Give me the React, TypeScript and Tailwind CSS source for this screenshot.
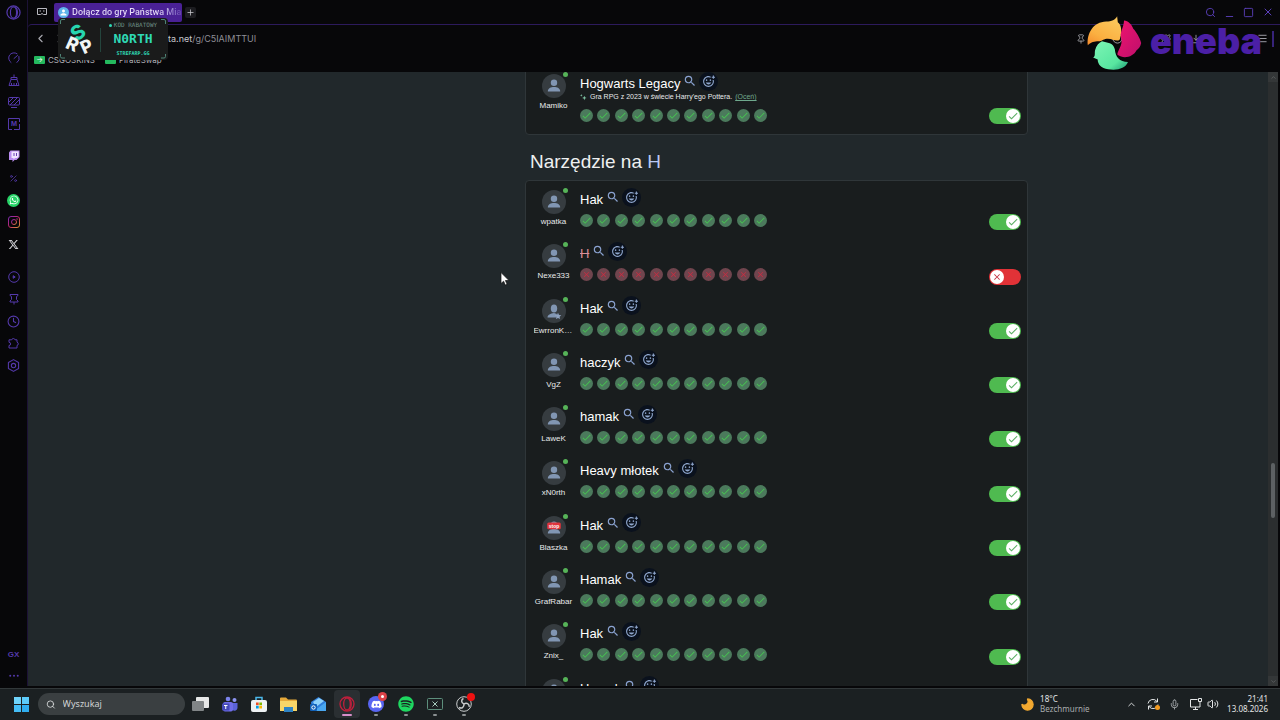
import type { ReactNode } from 'react';
import { MdCheck, MdClose, MdOutlineAddReaction, MdPerson, MdSearch } from 'react-icons/md';
import { FaDiscord, FaSpotify, FaWhatsapp, FaXTwitter } from 'react-icons/fa6';
import {
  ChevronDown,
  ChevronLeft,
  ChevronRight,
  ChevronUp,
  CircleCheck,
  Clock,
  Download,
  Menu,
  Mic,
  Minus,
  Moon,
  Percent,
  Pin,
  Plus,
  Puzzle,
  Search,
  Square,
  Volume2,
  X,
} from 'lucide-react';

type Row = {
  player: string;
  answer: string;
  accepted: boolean;
  avatar?: 'star' | 'stop';
};

const rows: Row[] = [
  { player: 'wpatka', answer: 'Hak', accepted: true },
  { player: 'Nexe333', answer: 'H', accepted: false },
  { player: 'EwrronKing', answer: 'Hak', accepted: true, avatar: 'star' },
  { player: 'VgZ', answer: 'haczyk', accepted: true },
  { player: 'LaweK', answer: 'hamak', accepted: true },
  { player: 'xN0rth', answer: 'Heavy młotek', accepted: true },
  { player: 'Blaszka', answer: 'Hak', accepted: true, avatar: 'stop' },
  { player: 'GrafRabar', answer: 'Hamak', accepted: true },
  { player: 'Znix_', answer: 'Hak', accepted: true },
  { player: '', answer: 'Hamak', accepted: true },
];

function Avatar({ kind }: { kind?: 'star' | 'stop' }) {
  return (
    <div className="relative flex size-6 shrink-0 items-center justify-center rounded-full bg-[#363c40]">
      <svg viewBox="0 0 24 24" className="size-6" aria-hidden="true">
        {kind === 'star' ? (
          <>
            <ellipse cx="12" cy="9.6" rx="3.2" ry="4" fill="#8196b3" />
            <path d="M5.5 18.5c0-3 3-4 6.5-4.6l3 1-1 3.6z" fill="#8196b3" />
            <path d="M16 13.8l1 2.1 2.3.3-1.7 1.6.4 2.3-2-1.1-2 1.1.4-2.3-1.7-1.6 2.3-.3z" fill="#8fa3c0" />
          </>
        ) : (
          <>
            <circle cx="12" cy="8.8" r="3.2" fill="#8196b3" />
            <path d="M5.8 17.5c0-3.3 3-4.5 6.2-4.5s6.2 1.2 6.2 4.5z" fill="#8196b3" />
          </>
        )}
        {kind === 'stop' && (
          <>
            <rect x="5.2" y="6.5" width="13.6" height="6.8" rx="1.5" fill="#e0343c" />
            <text x="12" y="11.6" textAnchor="middle" fontSize="5" fontWeight="700" fill="#fff" fontFamily="Liberation Sans, sans-serif">
              stop
            </text>
          </>
        )}
      </svg>
      <span className="absolute -top-0.5 -right-0.5 size-[5px] rounded-full bg-[#56b358]" />
    </div>
  );
}

function Votes({ accepted }: { accepted: boolean }) {
  return (
    <div className="flex w-[187px] justify-between">
      {Array.from({ length: 11 }, (_, i) =>
        accepted ? (
          <span key={i} className="flex size-[13px] items-center justify-center rounded-full bg-[#4b7a5c] text-[#47c052]">
            <MdCheck size={11} />
          </span>
        ) : (
          <span key={i} className="flex size-[13px] items-center justify-center rounded-full bg-[#70454e] text-[#c42f43]">
            <MdClose size={9} />
          </span>
        ),
      )}
    </div>
  );
}

function Toggle({ accepted, label }: { accepted: boolean; label: string }) {
  return (
    <label className="flex h-4 w-8 shrink-0 cursor-pointer items-center rounded-full bg-[#e13237] p-px has-checked:justify-end has-checked:bg-[#4fba50]">
      <input type="checkbox" defaultChecked={accepted} aria-label={label} className="peer sr-only" />
      <span className="flex size-3.5 items-center justify-center rounded-full bg-white text-[#c22f40] peer-checked:hidden">
        <MdClose size={10} />
      </span>
      <span className="hidden size-3.5 items-center justify-center rounded-full bg-white text-[#5cb065] peer-checked:flex">
        <MdCheck size={12} />
      </span>
    </label>
  );
}

function AnswerRow({ row, children }: { row: Row; children?: ReactNode }) {
  return (
    <li className="flex pr-1.5">
      <div className="flex w-[55px] shrink-0 flex-col items-center pt-[9px]">
        <Avatar kind={row.avatar} />
        <span className="w-10 truncate text-center text-[8px] leading-4 text-[#e8eaeb]">{row.player}</span>
      </div>
      <div className="-ml-px flex min-w-0 flex-1 flex-col pt-[7px]">
        <div className="flex h-[18px] items-center">
          <span className={row.accepted ? 'pt-1.5 text-[13px] leading-4 text-white' : 'pt-1.5 text-[13px] leading-4 text-[#dc8f98] line-through'}>
            {row.answer}
          </span>
          <button className="ml-[3px] text-[#8aa2d0]" aria-label="Szukaj odpowiedzi">
            <MdSearch size={14} />
          </button>
          <button className="ml-0.5 flex size-[19px] items-center justify-center rounded-full bg-[#0a111d] text-[#8ea6cd]" aria-label="Dodaj reakcję">
            <MdOutlineAddReaction size={13} />
          </button>
        </div>
        {children}
        <div className={children ? 'pt-2 pb-[7px]' : 'pt-2'}>
          <Votes accepted={row.accepted} />
        </div>
      </div>
      <div className="flex flex-col justify-end pb-[5px]">
        <Toggle accepted={row.accepted} label={`Odpowiedź gracza ${row.player}`} />
      </div>
    </li>
  );
}

function Sidebar() {
  const item = 'flex h-[22px] w-full items-center justify-center';
  return (
    <nav className="flex w-7 shrink-0 flex-col items-center border-r border-[#1c1236] text-[#5439ab]">
      <button className="flex h-[25px] items-center" aria-label="Opera">
        <OperaMark className="size-[15px]" />
      </button>
      <div className="mt-[22px] w-full">
        <button className={item} aria-label="GX Control">
          <svg viewBox="0 0 12 12" className="size-3" fill="none" stroke="currentColor" strokeLinecap="round">
            <path d="M3 10.5A5.2 5.2 0 1 1 9 1.7M11 4.5a5.2 5.2 0 0 1-2 6M6 6.5l3.5-3" />
          </svg>
        </button>
        <button className={item} aria-label="GX Cleaner">
          <svg viewBox="0 0 12 12" className="size-3" fill="none" stroke="currentColor">
            <path d="M6 .5v3M3 3.5h6v2H3zM3 5.5L1 11.5h10L9 5.5M3.5 9v2.5M6 9v2.5M8.5 9v2.5" />
          </svg>
        </button>
        <button className={item} aria-label="Tapety">
          <svg viewBox="0 0 12 12" className="size-3" fill="none" stroke="currentColor">
            <rect x=".5" y="1.5" width="11" height="7.5" rx="1" />
            <path d="M1 6l4-4M2 9l7-7M6 9l5-5M3 11.5h6" />
          </svg>
        </button>
        <button className={item} aria-label="Mody">
          <svg viewBox="0 0 12 12" className="size-3" fill="none" stroke="currentColor">
            <path d="M8 .5H.5v11H4M8 .5h3.5V4M11.5 6v5.5H6" />
            <text x="6" y="8.3" textAnchor="middle" fontSize="6.5" fontWeight="700" stroke="none" fill="currentColor" fontFamily="Inter, sans-serif">M</text>
          </svg>
        </button>
      </div>
      <div className="mt-2.5 w-full">
        <button className={item} aria-label="Twitch">
          <svg viewBox="0 0 12 12" className="size-3">
            <path d="M2.5.5h9v6.5L8.5 10H6.5l-2 2v-2H1V2.5z" fill="#b98cf0" />
            <path d="M3.5 1.5h7v5L9 8H7L5.5 9.5V8h-2z" fill="#f1e6ff" />
            <path d="M6 3v3M8.5 3v3" stroke="#6a3fb5" />
          </svg>
        </button>
        <button className={item} aria-label="Promocje"><Percent size={9} /></button>
        <button className={item} aria-label="WhatsApp">
          <span className="flex size-[13px] items-center justify-center rounded-full bg-[#25d366] text-white"><FaWhatsapp size={10} /></span>
        </button>
        <button className={item} aria-label="Instagram">
          <svg viewBox="0 0 12 12" className="size-3" fill="none" stroke="url(#insta)">
            <defs>
              <linearGradient id="insta" x1="0" y1="0" x2="1" y2="1">
                <stop offset="0" stopColor="#7c2bb8" />
                <stop offset=".5" stopColor="#c4286b" />
                <stop offset="1" stopColor="#d99a35" />
              </linearGradient>
            </defs>
            <rect x=".5" y=".5" width="11" height="11" rx="2.5" />
            <circle cx="6" cy="6" r="2.5" />
            <circle cx="9" cy="3" r=".3" />
          </svg>
        </button>
        <button className={item} aria-label="X"><FaXTwitter size={11} className="text-[#cfcfd4]" /></button>
      </div>
      <div className="mt-[11px] w-full">
        <button className={item} aria-label="Odtwarzacz">
          <svg viewBox="0 0 12 12" className="size-3" fill="none" stroke="currentColor"><circle cx="6" cy="6" r="5.3" /><path d="M5.2 4.7l2 1.3-2 1.3z" fill="currentColor" /></svg>
        </button>
        <button className={item} aria-label="Przypięte">
          <svg viewBox="0 0 12 12" className="size-3" fill="none" stroke="currentColor"><path d="M2 1.5h8v1L8.5 3.5v3L10 8v1H2V8l1.5-1.5v-3L2 2.5zM6 9v2.5" /></svg>
        </button>
        <button className={item} aria-label="Historia"><Clock size={13} /></button>
        <button className={item} aria-label="Rozszerzenia">
          <svg viewBox="0 0 12 12" className="size-3" fill="none" stroke="currentColor" strokeLinejoin="round">
            <path d="M1 2.8h2.700a1.700 1.700 0 0 1 3.300 0h2v2.400a1.700 1.700 0 0 1 0 3.300V11H1V8.500a1.600 1.600 0 0 0 0-3.200z" />
          </svg>
        </button>
        <button className={item} aria-label="Ustawienia">
          <svg viewBox="0 0 12 12" className="size-[13px]" fill="none" stroke="currentColor"><path d="M6 .6l4.7 2.7v5.4L6 11.4 1.3 8.7V3.3z" strokeLinejoin="round" /><circle cx="6" cy="6" r="2" /></svg>
        </button>
      </div>
      <div className="mt-auto w-full">
        <button className="flex h-[22px] w-full items-center justify-center text-[8px] font-bold">GX</button>
        <button className="flex h-5 w-full items-center justify-center" aria-label="Więcej">
          <svg viewBox="0 0 12 4" className="w-2.5" fill="currentColor">
            <circle cx="1.5" cy="2" r="1.2" />
            <circle cx="6" cy="2" r="1.2" />
            <circle cx="10.5" cy="2" r="1.2" />
          </svg>
        </button>
      </div>
    </nav>
  );
}

function OperaMark({ className }: { className: string }) {
  return (
    <svg viewBox="0 0 16 16" className={className} fill="none" stroke="currentColor" strokeWidth="1.3" aria-hidden="true">
      <circle cx="8" cy="8" r="7" />
      <ellipse cx="8" cy="8" rx="3.3" ry="6" />
      <path d="M10 2.5c3 2 3 9 0 11" />
    </svg>
  );
}

function SponsorCoupon() {
  return (
    <div className="absolute top-[18px] left-[58px] flex h-[42px] w-[110px] items-center rounded bg-[#1a1b1b]">
      <svg viewBox="0 0 110 42" className="absolute inset-0 size-full" fill="none" stroke="#4f8577" aria-hidden="true">
        <path d="M2.5 6V3a1.5 1.5 0 0 1 1.5-1.5h3M103 1.5h3a1.5 1.5 0 0 1 1.5 1.5v3M2.5 36v2.5a1.5 1.5 0 0 0 1.5 1.5h3M103 40h3a1.5 1.5 0 0 0 1.5-1.5V36" />
        <path d="M42.5 10v24" stroke="#24453d" />
      </svg>
      <svg viewBox="0 0 42 42" className="h-full w-[42px]" fontFamily="Inter, sans-serif" fontWeight="800" textAnchor="middle" aria-label="SRP">
        <text transform="translate(24 20) rotate(-36)" fontSize="20" fill="#27d6b0">S</text>
        <text transform="translate(12 32) rotate(24)" fontSize="18" fill="#f2f5f4">R</text>
        <text transform="translate(31 34) rotate(-24)" fontSize="18" fill="#f2f5f4">P</text>
      </svg>
      <div className="flex flex-1 flex-col items-center pr-0.5 font-['DejaVu_Sans_Mono',monospace] font-bold text-[#2fd9b5]">
        <span className="flex items-center gap-0.5 text-[6px] leading-2 font-normal text-[#6d8f86]">
          <span className="size-[3px] rounded-full bg-[#2fd9b5]" />
          KOD RABATOWY
        </span>
        <span className="py-0.5 text-[13px] leading-4">N0RTH</span>
        <span className="text-[5px] leading-2">STREFARP.GG</span>
      </div>
    </div>
  );
}

function SponsorLogo() {
  return (
    <div className="absolute top-0 right-[18px] flex h-20 items-center">
      <svg viewBox="138 40 170 176" className="mt-1.5 mr-[7px] h-[58px] w-[57px]" aria-hidden="true">
        <defs>
          <linearGradient id="amber" x1="0" y1="1" x2=".6" y2="0">
            <stop offset="0" stopColor="#f58a2c" />
            <stop offset=".4" stopColor="#fbb041" />
            <stop offset="1" stopColor="#fbc65a" />
          </linearGradient>
          <linearGradient id="rose" x1="0" y1="0" x2="1" y2="1">
            <stop offset="0" stopColor="#f0146e" />
            <stop offset="1" stopColor="#bd0f6c" />
          </linearGradient>
          <linearGradient id="mint" x1="0" y1="0" x2="1" y2="1">
            <stop offset="0" stopColor="#7df5b5" />
            <stop offset=".7" stopColor="#58e6a0" />
            <stop offset="1" stopColor="#1d9a74" />
          </linearGradient>
        </defs>
        <path d="M142 135C138 100 158 64 198 63c16 0 28-5 33-16l2 18c12 8 13 30 6 52-10 10-22-4-40-2-12 2-14 8-24 8-14 0-22 2-33 12z" fill="url(#amber)" />
        <path d="M252 60c12 1 24 12 28 25 10 10 20 28 24 43-2 12-8 17-14 22-10 20-38 28-58 14-2-12 18-28 11-52-5-16 8-30 9-52z" fill="url(#rose)" />
        <path d="M185 123c16 5 34 3 39 24 2 24 14 38 40 39-8 20-32 26-60 22-22-3-32-16-32-30l-14-6c8-4 4-12 6-22 4-14 11-22 21-27z" fill="url(#mint)" />
      </svg>
      <span className="pt-0.5 font-[Inter,sans-serif] text-4xl font-black text-[#4b1fa6]">eneba</span>
    </div>
  );
}

function BrowserBar() {
  return (
    <header className="flex h-[72px] flex-col font-[Inter,sans-serif]">
      <div className="flex h-6 items-center pr-1.5 text-[#5a3fba]">
        <svg viewBox="0 0 12 10" className="ml-2 h-2.5 w-3" fill="none" stroke="#b9b9c0" aria-hidden="true">
          <path d="M1.5 1.5h9v6H7.5L6 6.5l-1.5 1h-3zM3.5 4h1.5M7 4h1.5" />
        </svg>
        <div className="mt-px ml-1.5 flex h-[19px] w-32 items-center gap-[3px] rounded-xs bg-[#4a2196] px-1">
          <span className="flex size-[11px] shrink-0 items-center justify-center rounded-full bg-[#5fb4ea] text-white">
            <MdPerson size={9} />
          </span>
          <span className="bg-linear-to-r from-[#e6ddf8] from-80% to-[#6a48b0] bg-clip-text font-[Roboto,sans-serif] text-[9px] font-medium whitespace-nowrap text-transparent">
            Dołącz do gry Państwa Mia
          </span>
        </div>
        <button className="ml-[3px] flex size-[11px] items-center justify-center rounded-xs bg-[#1c1c20] text-[#c9c9cf]" aria-label="Nowa karta">
          <Plus size={9} />
        </button>
        <div className="ml-auto flex items-center gap-2">
          <button aria-label="Szukaj kart"><Search size={11} /></button>
          <button className="flex h-3 items-end" aria-label="Minimalizuj"><Minus size={11} className="-mb-1" /></button>
          <button aria-label="Maksymalizuj"><Square size={11} /></button>
          <button aria-label="Zamknij"><X size={12} /></button>
        </div>
      </div>
      <div className="flex h-7 items-center rounded-tl border-t border-[#2c1a5c] pr-1.5 pl-1.5 text-[#a9a9b0]">
        <button aria-label="Wstecz"><ChevronLeft size={13} /></button>
        <button className="ml-1.5 text-[#44444a]" aria-label="Dalej"><ChevronRight size={13} /></button>
        <span className="flex-1 pl-[102px] text-[9px] text-[#8e8e96]">
          <span className="text-[#c9c9cf]">ta.net</span>/g/C5IAIMTTUI
        </span>
        <div className="flex items-center">
          <button className="mr-[26px]" aria-label="Przypnij"><Pin size={10} /></button>
          <button className="mr-[38px]" aria-label="Zabezpieczenia"><CircleCheck size={11} /></button>
          <button className="mr-5" aria-label="Rozszerzenia"><Puzzle size={10} /></button>
          <button className="mr-14" aria-label="Pobrane"><Download size={10} /></button>
          <button className="mr-1" aria-label="Menu"><Menu size={11} /></button>
          <span className="h-4 w-0.5 bg-[#37237a]" />
        </div>
      </div>
      <div className="flex h-4 items-center gap-2.5 pl-1.5 text-[8px] text-[#b4b4ba]">
        <a href="#cs" className="flex items-center gap-[3px]">
          <span className="flex h-2 w-[11px] items-center justify-center rounded-[1px] bg-[#24b95e] text-[7px] text-white">→</span>
          CSGOSKINS
        </a>
        <a href="#pirate" className="flex items-center gap-[3px]">
          <span className="h-2 w-[11px] rounded-[1px] bg-[#24b95e]" />
          PirateSwap
        </a>
      </div>
    </header>
  );
}

function Taskbar() {
  const item = 'relative flex h-7 items-center justify-center';
  const dot = 'absolute bottom-0.5 h-0.5 w-1 rounded-full bg-[#8b9092]';
  return (
    <footer className="flex h-8 shrink-0 items-center border-t border-[#32383a] bg-[#1b2022] pb-px pl-3.5 font-['Noto_Sans',sans-serif] text-[#e4e6e7]">
      <button className="grid grid-cols-2 gap-px" aria-label="Start">
        <span className="size-[7px] bg-[#6fd3fb]" />
        <span className="size-[7px] bg-[#5ccbfa]" />
        <span className="size-[7px] bg-[#45bdf6]" />
        <span className="size-[7px] bg-[#30aef0]" />
      </button>
      <label className="ml-[9px] flex h-[22px] w-[147px] items-center gap-[7px] rounded-full bg-[#3a3f41] px-2">
        <Search size={11} />
        <input aria-label="Wyszukaj" placeholder="Wyszukaj" className="w-full bg-transparent text-[9px] outline-none placeholder:text-[#d0d3d4]" />
      </label>
      <div className="ml-px grid w-[293px] grid-cols-10">
        <button className={item} aria-label="Widok zadań">
          <svg viewBox="0 0 17 16" className="h-4 w-[17px]"><rect x="4" y="1" width="13" height="11" rx="1" fill="#e7e8e8" /><rect x="0" y="5" width="12" height="10" rx="1" fill="#818587" /></svg>
        </button>
        <button className={item} aria-label="Teams">
          <svg viewBox="0 0 16 16" className="size-4"><circle cx="6" cy="3" r="2.3" fill="#7b83eb" /><circle cx="12.5" cy="4" r="2" fill="#8c93f0" /><path d="M9 7h6.5v5a3 3 0 0 1-5 2z" fill="#5a62d8" /><rect x="1" y="6" width="10" height="9.5" rx="2" fill="#6f6de8" /><rect x="0" y="7.5" width="7.5" height="7" rx="1" fill="#4549b8" /><path d="M2 9.5h3.5M3.75 9.5v3.5" stroke="#fff" /></svg>
        </button>
        <button className={item} aria-label="Microsoft Store">
          <svg viewBox="0 0 16 16" className="size-4"><path d="M5 5V1.5h6V5" fill="none" stroke="#4cb9ec" strokeWidth="1.5" /><rect x="0" y="4" width="16" height="12" rx="2" fill="#eef1f3" /><path d="M5 6.5h2.7v2.7H5z" fill="#f04e23" /><path d="M8.3 6.5H11v2.7H8.3z" fill="#7db700" /><path d="M5 9.8h2.7v2.7H5z" fill="#00a0e8" /><path d="M8.3 9.8H11v2.7H8.3z" fill="#fbb500" /></svg>
        </button>
        <button className={item} aria-label="Eksplorator plików">
          <svg viewBox="0 0 17 15" className="h-[15px] w-[17px]"><path d="M0 1.5A1 1 0 0 1 1 .5h5l2 2h8a1 1 0 0 1 1 1V14H0z" fill="#e6a93a" /><path d="M0 4h17v10H0z" fill="#f8d568" /><path d="M4 10h9v5H4z" fill="#2f83c4" /></svg>
        </button>
        <button className={item} aria-label="Outlook">
          <svg viewBox="0 0 16 16" className="size-4"><path d="M1 6l7.5-5L16 6v9H2z" fill="#2f7fdc" /><path d="M3 6l6-4 5 3-8 6z" fill="#8fd2fa" /><path d="M16 6L4 15h12z" fill="#49a7f0" /><rect x="0" y="8" width="7" height="7" rx="1" fill="#1160b7" /><circle cx="3.5" cy="11.5" r="1.7" fill="none" stroke="#fff" /></svg>
        </button>
        <button className="relative mx-0.5 flex h-7 items-center justify-center rounded bg-[#2a2f32] text-[#c01f3c]" aria-label="Opera GX">
          <OperaMark className="size-4" />
          <span className="absolute bottom-0.5 h-0.5 w-2.5 rounded-full bg-[#d68fc9]" />
        </button>
        <button className={item} aria-label="Discord">
          <span className="flex size-4 items-center justify-center rounded-full bg-[#5865f2] text-white"><FaDiscord size={11} /></span>
          <span className="absolute top-0.5 right-1 flex size-[9px] items-center justify-center rounded-full bg-[#dd4248]"><span className="size-[3px] rounded-full bg-white" /></span>
          <span className={dot} />
        </button>
        <button className={item} aria-label="Spotify"><FaSpotify size={16} className="text-[#1ed760]" /><span className={dot} /></button>
        <button className={item} aria-label="Xbox Game Bar">
          <svg viewBox="0 0 16 12" className="h-3 w-4" fill="none" stroke="#5d8f7c"><rect x=".5" y=".5" width="15" height="11" rx="1" /><path d="M5.5 3.5l5 5M10.5 3.5l-5 5" stroke="#a5c9bb" /></svg>
          <span className={dot} />
        </button>
        <button className={item} aria-label="OBS Studio">
          <svg viewBox="0 0 16 16" className="size-4" fill="none" stroke="#c9cccd"><circle cx="8" cy="8" r="7.3" /><path d="M8 8C5 7 5 3.5 7.5 2.5M8 8c2.5-2 5.5 0 5.2 2.8M8 8c.3 3.2-2.5 5-5 3.5" strokeWidth="1.5" /></svg>
          <span className="absolute top-[3px] right-1 size-2 rounded-full bg-[#ee1111]" />
          <span className={dot} />
        </button>
      </div>
      <div className="ml-auto flex items-center pr-3">
        <Moon size={15} className="-scale-x-100 fill-[#f2a830] text-[#f2a830]" />
        <div className="ml-[5px] flex w-[86px] flex-col text-[8px] leading-2.5">
          <span>18°C</span>
          <span className="text-[#a9adaf]">Bezchmurnie</span>
        </div>
        <div className="flex items-center gap-2.5">
          <button aria-label="Ukryte ikony"><ChevronUp size={11} /></button>
          <button className="relative" aria-label="Aktualizacja">
            <svg viewBox="0 0 12 12" className="size-3" fill="none" stroke="currentColor"><path d="M1 5.5A5 5 0 0 1 10 3.5M10.5.5v3.5H7M11 6.5A5 5 0 0 1 2 8.5M1.5 11.5V8H5" /></svg>
            <span className="absolute -right-px bottom-0 size-[5px] rounded-full bg-[#f39a1f]" />
          </button>
          <button className="text-[#a9adaf]" aria-label="Mikrofon"><Mic size={11} /></button>
          <button className="flex items-center gap-[5px]" aria-label="Sieć i głośność">
            <svg viewBox="0 0 12 12" className="size-3" fill="none" stroke="currentColor"><path d="M7.5 1.5h-7v7.5h9.5V6M3 11.5h5M5.5 9v2.5M8.5.5h3v3h-3zM10 3.5V6" /></svg>
            <Volume2 size={12} />
          </button>
        </div>
        <div className="ml-2 flex flex-col text-right text-[8px] leading-2.5">
          <span>21:41</span>
          <span>13.08.2026</span>
        </div>
      </div>
    </footer>
  );
}

export default function App() {
  const card = 'rounded border border-[#2f3639] bg-[#191d1e]';
  return (
    <div className="relative flex h-screen flex-col overflow-hidden bg-[#070709] font-['Liberation_Sans',Arial,sans-serif]">
      <div className="flex min-h-0 flex-1 pb-0.5">
        <Sidebar />
        <div className="flex min-w-0 flex-1 flex-col">
          <BrowserBar />
          <div className="flex min-h-0 flex-1 pr-0.5">
            <main className="flex min-w-0 flex-1 justify-end overflow-hidden bg-[#21282b] pr-60">
              <div className="-mt-2 w-full max-w-[503px]">
                <ul className={`${card} pb-[5px]`}>
                  <AnswerRow row={{ player: 'Mamiko', answer: 'Hogwarts Legacy', accepted: true }}>
                    <p className="flex h-[11px] items-end gap-[3px] text-[7px] leading-2 whitespace-nowrap text-[#e8eaeb]">
                      <svg viewBox="0 0 8 8" className="size-[7px]" fill="#7fc4a4" aria-hidden="true">
                        <path d="M5 2l.7 1.8L7.5 4.5l-1.8.7L5 7l-.7-1.8-1.8-.7 1.8-.7zM1.5 0l.4 1.1L3 1.5l-1.1.4L1.5 3l-.4-1.1L0 1.5l1.1-.4z" />
                      </svg>
                      Gra RPG z 2023 w świecie Harry'ego Pottera.
                      <a href="#ocen" className="text-[#6fa98d] underline">(Oceń)</a>
                    </p>
                  </AnswerRow>
                </ul>
                <h2 className="px-[5px] pt-[17px] pb-2 text-[19px] leading-5 text-[#eef0f1]">
                  Narzędzie na <span className="text-[#b9c8f2]">H</span>
                </h2>
                <ul className={`${card} grid h-[545px] auto-rows-fr`}>
                  {rows.map((row, i) => (
                    <AnswerRow key={i} row={row} />
                  ))}
                </ul>
              </div>
            </main>
            <div className="relative flex w-2.5 flex-col justify-between bg-[#2b2e2f] text-[#6d7072]">
              <div className="flex h-2.5 items-center justify-center bg-[#343738]"><ChevronUp size={7} /></div>
              <div className="absolute top-[391px] left-[3px] h-[55px] w-1 rounded-full bg-[#5d6163]" />
              <div className="flex h-2.5 items-center justify-center bg-[#343738]"><ChevronDown size={7} /></div>
            </div>
          </div>
        </div>
      </div>
      <Taskbar />
      <SponsorCoupon />
      <SponsorLogo />
      <svg viewBox="0 0 10 14" className="absolute top-[272px] left-[500px] h-3.5 w-2.5" aria-hidden="true">
        <path d="M1 .5v11l2.6-2.3 1.7 3.9 1.8-.8-1.7-3.8H9z" fill="#fff" stroke="#111" strokeWidth=".7" />
      </svg>
    </div>
  );
}
